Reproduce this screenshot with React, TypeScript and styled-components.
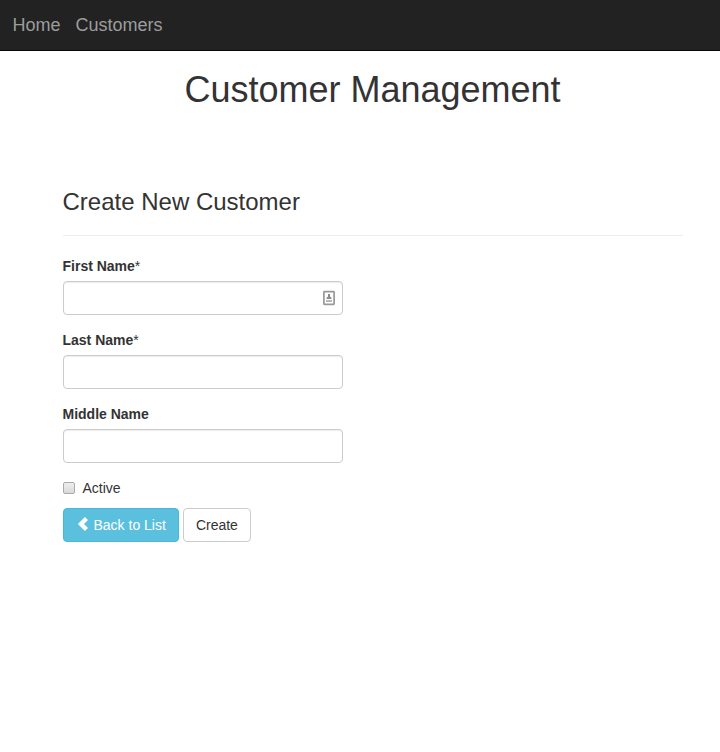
import React, { useState } from "react";
import styled, { createGlobalStyle } from "styled-components";

const GlobalStyle = createGlobalStyle`
  *, *::before, *::after { box-sizing: border-box; }
  body {
    margin: 0;
    background: #fff;
    color: #333;
    font: 14px/20px "Liberation Sans", Arial, sans-serif;
  }
`;

const Navbar = styled.nav`
  display: flex;
  gap: 15px;
  height: 51px;
  padding: 15px 12.5px 0;
  background: #222;
  border-bottom: 1px solid #080808;
`;

const NavLink = styled.a`
  color: #9d9d9d;
  font-size: 18px;
  line-height: 20px;
  text-decoration: none;
`;

const Content = styled.main`
  width: 620px;
  margin-left: 62.5px;
`;

const Title = styled.h1`
  margin: 19px 0 79px;
  font-size: 36px;
  font-weight: 400;
  line-height: 40px;
  text-align: center;
`;

const Subtitle = styled.h3`
  margin: 0;
  padding-bottom: 20px;
  border-bottom: 1px solid #eee;
  font-size: 24px;
  font-weight: 400;
  line-height: 26px;
`;

const Form = styled.form`
  display: flex;
  flex-direction: column;
  gap: 15px;
  width: 280px;
  margin-top: 20px;
`;

const Field = styled.div`
  display: flex;
  flex-direction: column;
  gap: 5px;
`;

const Label = styled.label`
  font-weight: 700;
`;

const Required = styled.span`
  font-weight: 400;
`;

const InputWrap = styled.div`
  position: relative;
  height: 34px;
`;

const Input = styled.input`
  display: block;
  width: 100%;
  height: 34px;
  padding: 6px 12px;
  border: 1px solid #ccc;
  border-radius: 4px;
  background: #fff;
  box-shadow: inset 0 1px 1px rgba(0, 0, 0, 0.075);
  color: #555;
  font: inherit;
  outline: none;
`;

const AutofillIcon = styled.svg`
  position: absolute;
  top: 9px;
  right: 8px;
`;

const CheckLabel = styled.label`
  display: flex;
  align-items: center;
  gap: 8px;
  height: 20px;
`;

const Checkbox = styled.input`
  appearance: none;
  width: 12px;
  height: 12px;
  margin: 0;
  border: 1px solid #aaa;
  border-radius: 2px;
  background: linear-gradient(#eee, #d9d9d9);

  &:checked {
    background: #777;
  }
`;

const Actions = styled.div`
  display: flex;
  gap: 4px;
  margin-top: -5px;
`;

const Button = styled.button<{ $info?: boolean }>`
  display: flex;
  align-items: center;
  height: 34px;
  padding: 0 12px;
  border: 1px solid ${(p) => (p.$info ? "#46b8da" : "#ccc")};
  border-radius: 4px;
  background: ${(p) => (p.$info ? "#5bc0de" : "#fff")};
  color: ${(p) => (p.$info ? "#fff" : "#333")};
  font: inherit;
  white-space: nowrap;
`;

const Chevron = styled.svg`
  flex: none;
  margin: -2px 4px 0 0;
`;

const fields = [
  { id: "firstName", label: "First Name", required: true, autofill: true },
  { id: "lastName", label: "Last Name", required: true, autofill: false },
  { id: "middleName", label: "Middle Name", required: false, autofill: false },
];

export default function App() {
  const [active, setActive] = useState(false);
  return (
    <>
      <GlobalStyle />
      <Navbar>
        <NavLink href="#home">Home</NavLink>
        <NavLink href="#customers">Customers</NavLink>
      </Navbar>
      <Content>
        <Title>Customer Management</Title>
        <Subtitle>Create New Customer</Subtitle>
        <Form onSubmit={(e) => e.preventDefault()}>
          {fields.map((f) => (
            <Field key={f.id}>
              <Label htmlFor={f.id}>
                {f.label}
                {f.required && <Required>*</Required>}
              </Label>
              <InputWrap>
                <Input id={f.id} type="text" autoComplete="off" />
                {f.autofill && (
                  <AutofillIcon width="12" height="16" viewBox="0 0 12 16">
                    <rect x="0.9" y="1.7" width="10.2" height="12.6" rx="0.6" fill="#fff" stroke="#999" strokeWidth="1.7" />
                    <path d="M5 4h2v2.4l1.4 1V9H3.6V7.4L5 6.4z" fill="#8c8c8c" />
                    <path d="M3 10h6v2H3z" fill="#b8b8b8" />
                  </AutofillIcon>
                )}
              </InputWrap>
            </Field>
          ))}
          <CheckLabel>
            <Checkbox type="checkbox" checked={active} onChange={(e) => setActive(e.target.checked)} />
            Active
          </CheckLabel>
          <Actions>
            <Button type="button" $info>
              <Chevron width="14" height="14" viewBox="0 0 14 14">
                <path d="M8.9 0 12 3 8 7 12 11 8.9 14 1.9 7z" fill="#fff" />
              </Chevron>
              Back to List
            </Button>
            <Button type="submit">Create</Button>
          </Actions>
        </Form>
      </Content>
    </>
  );
}
